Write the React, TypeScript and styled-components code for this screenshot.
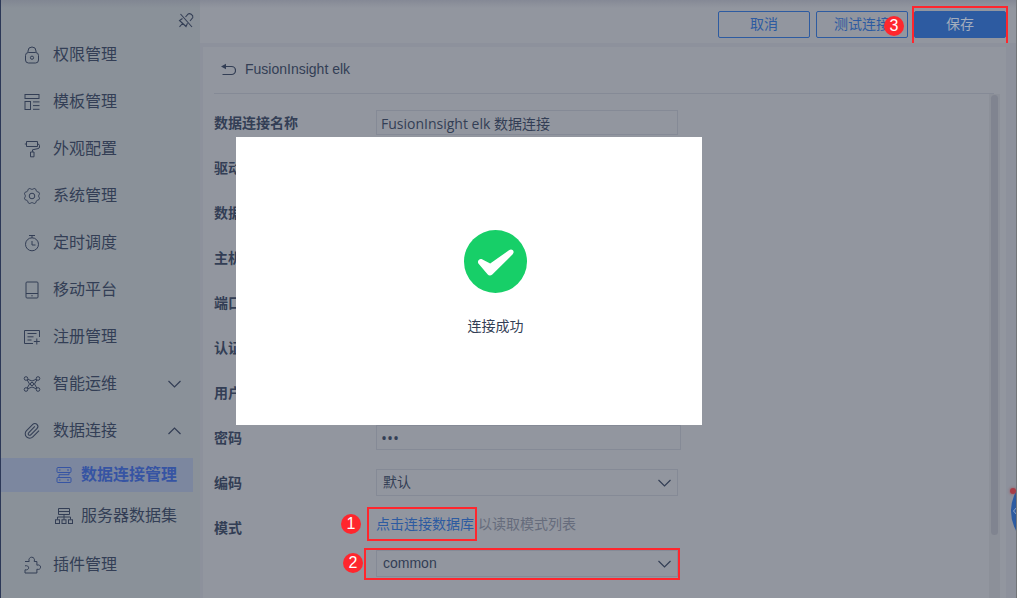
import React from "react";
import styled, { createGlobalStyle, css } from "styled-components";

const colors = {
  ink: "#333e55",
  muted: "#666c7c",
  blue: "#2d5ba1",
  active: "#3654a3",
  activeRow: "#7c879f",
  side: "#8a9199",
  panel: "#92969f",
  gutter: "#8d919c",
  line: "#858a96",
  red: "#ff262d",
};

const cjk = `"Noto Sans CJK SC", sans-serif`;

const GlobalStyle = createGlobalStyle`
  * { box-sizing: border-box; }
  body {
    margin: 0;
    color: ${colors.ink};
    background: ${colors.gutter};
    font: 14px/20px "Liberation Sans", ${cjk};
  }
  button, input, select { font: inherit; color: inherit; }
`;

const Page = styled.div`
  position: relative;
  display: grid;
  grid-template-columns: 199px 1fr;
  height: 100vh;
  overflow: hidden;
  border-left: 1px solid #2c3857;
  border-right: 1px solid #727579;
`;

const topShade = css`
  background-image: linear-gradient(rgba(120, 124, 140, 0.5), rgba(120, 124, 140, 0) 8px);
`;

const Sidebar = styled.aside`
  background-color: ${colors.side};
  ${topShade}
`;

const SidebarTop = styled.div`
  display: flex;
  justify-content: flex-end;
  align-items: flex-end;
  height: 31px;
  padding: 0 6px 3px 0;
`;

const PinButton = styled.button`
  display: flex;
  padding: 0;
  border: 0;
  background: none;
`;

const Menu = styled.ul`
  margin: 0;
  padding: 0;
  list-style: none;
`;

const SubMenu = styled(Menu)`
  display: grid;
  gap: 7px;
  padding: 4px 7px 8px 0;
`;

const MenuLink = styled.a`
  display: flex;
  align-items: center;
  gap: 12px;
  height: 47px;
  padding: 0 19px 0 22px;
  color: inherit;
  font-size: 16px;
  text-decoration: none;
`;

const SubLink = styled(MenuLink)<{ $active?: boolean }>`
  gap: 8px;
  height: 34px;
  padding: 0 0 0 54px;
  color: ${(p) => (p.$active ? colors.active : "inherit")};
  font-weight: ${(p) => (p.$active ? 700 : 400)};
  background: ${(p) => (p.$active ? colors.activeRow : "none")};
`;

const MenuText = styled.span`
  flex: 1;
  white-space: nowrap;
`;

const Main = styled.main`
  display: flex;
  flex-direction: column;
  min-width: 0;
`;

const ActionBar = styled.header`
  display: flex;
  justify-content: flex-end;
  gap: 6px;
  height: 43px;
  padding: 11px 10px 0 0;
  background-color: ${colors.panel};
  ${topShade}
`;

const ActionButton = styled.button<{ $primary?: boolean }>`
  width: 92px;
  height: 27px;
  padding: 0 0 2px;
  border: 1px solid ${colors.blue};
  border-radius: 2px;
  color: ${(p) => (p.$primary ? "#a3adbd" : colors.blue)};
  background: ${(p) => (p.$primary ? colors.blue : "none")};
`;

const Anchor = styled.span`
  position: relative;
  display: inline-block;
`;

const Frame = styled.span<{ $inset: string; $open?: boolean }>`
  position: absolute;
  inset: ${(p) => p.$inset};
  border: 2px solid ${colors.red};
  border-bottom-width: ${(p) => (p.$open ? 0 : 2)}px;
  pointer-events: none;
`;

const Badge = styled.span<{ $left: number; $top: number }>`
  position: absolute;
  left: ${(p) => p.$left}px;
  top: ${(p) => p.$top}px;
  width: 20px;
  height: 20px;
  border-radius: 50%;
  color: #fff;
  background: ${colors.red};
  font-size: 16px;
  text-align: center;
`;

const Panel = styled.section`
  flex: 1;
  display: flex;
  flex-direction: column;
  margin: 4px 10px 0 3px;
  padding: 0 6px 0 11px;
  background: ${colors.panel};
`;

const TitleRow = styled.div`
  display: flex;
  align-items: center;
  gap: 9px;
  height: 47px;
  margin-right: 6px;
  padding: 0 0 2px 7px;
  border-bottom: 1px solid ${colors.line};
`;

const Title = styled.h1`
  margin: 0;
  font-size: 14px;
  font-weight: 400;
`;

const Body = styled.div`
  flex: 1;
  display: flex;
  justify-content: space-between;
`;

const Form = styled.form`
  display: grid;
  align-content: start;
  gap: 18px;
  padding-top: 15px;
`;

const Row = styled.div<{ $top?: boolean }>`
  display: grid;
  grid-template-columns: 162px 305px;
  align-items: ${(p) => (p.$top ? "start" : "center")};
  min-height: 27px;
`;

const Label = styled.label`
  padding-top: 1px;
  font-weight: 700;
  line-height: 26px;
`;

const TextField = styled.input<{ $wide?: boolean }>`
  width: ${(p) => (p.$wide ? 305 : 302)}px;
  height: 25px;
  padding: 0 4px;
  border: 1px solid ${colors.line};
  border-radius: 0;
  background: none;
  font-family: "Open Sans", ${cjk};
  font-size: ${(p) => (p.$wide ? 16 : 14)}px;
`;

const SelectWrap = styled.div`
  position: relative;
  width: 302px;
  height: 27px;
`;

const Select = styled.select`
  appearance: none;
  display: block;
  width: 100%;
  height: 100%;
  padding: 0 30px 2px 6px;
  border: 1px solid ${colors.line};
  border-radius: 0;
  background: none;
`;

const SelectArrow = styled.span`
  position: absolute;
  top: 10px;
  right: 7px;
  display: flex;
  pointer-events: none;
`;

const SchemaField = styled.div`
  display: grid;
  gap: 16px;
`;

const Hint = styled.div`
  display: flex;
  gap: 4px;
  color: ${colors.muted};
`;

const ConnectLink = styled.a`
  color: ${colors.blue};
  text-decoration: none;
`;

const ScrollTrack = styled.div`
  width: 11px;
  padding: 1px 2px;
  background: #8c9099;
`;

const ScrollThumb = styled.div`
  height: 440px;
  border-radius: 4px;
  background: #808490;
`;

const HelpBubble = styled.a`
  position: absolute;
  top: 471px;
  right: -75px;
  width: 80px;
  height: 80px;
  border-radius: 50%;
  background: ${colors.blue};
`;

const HelpMark = styled.svg`
  position: absolute;
  left: 1px;
  top: 35px;
`;

const HelpDot = styled.span`
  position: absolute;
  top: 488px;
  right: 0;
  width: 6px;
  height: 6px;
  border-radius: 50%;
  background: #a63d47;
  box-shadow: 0 0 2px 1px rgba(166, 61, 71, 0.3);
`;

const Dialog = styled.div`
  position: absolute;
  left: 235px;
  top: 137px;
  display: flex;
  flex-direction: column;
  align-items: center;
  gap: 23px;
  width: 466px;
  height: 288px;
  padding: 93px 0 0 53px;
  background: #fff;
`;

const DialogText = styled.p`
  margin: 0;
`;

type IconProps = { children: React.ReactNode; size?: number };

const Icon = ({ children, size = 18 }: IconProps) => (
  <svg
    width={size}
    height={size}
    viewBox="0 0 18 18"
    fill="none"
    stroke="currentColor"
    strokeWidth="1"
    aria-hidden="true"
  >
    {children}
  </svg>
);

const Chevron = ({ up }: { up?: boolean }) => (
  <svg width="13" height="8" viewBox="0 0 13 8" fill="none" stroke="currentColor" strokeWidth="1.2" aria-hidden="true">
    <path d={up ? "M.5 7 6.5 1l6 6" : "M.5 1l6 6 6-6"} />
  </svg>
);

// Outline of an eight-lobed cog centred in the 18-unit icon box.
const gearPoints = Array.from({ length: 64 }, (_, i) => {
  const angle = (i / 64) * Math.PI * 2;
  const radius = 7.3 + 0.7 * Math.cos(8 * angle + Math.PI);
  return `${(9 + radius * Math.cos(angle)).toFixed(2)},${(9 + radius * Math.sin(angle)).toFixed(2)}`;
}).join(" ");

const icons = {
  lock: (
    <>
      <rect x="2.500" y="6.500" width="13" height="10.500" rx="3" />
      <path d="M5 6.500V5a4 4 0 0 1 8 0v1.500" />
      <circle cx="9" cy="11.700" r="1.600" />
    </>
  ),
  template: (
    <>
      <rect x="2" y="1.500" width="14" height="4" />
      <rect x="2" y="8.500" width="5.500" height="8" />
      <path d="M10 8.900h6.500M10 12.600h6.500M10 16.300h6.500" />
    </>
  ),
  roller: (
    <path d="M3.500 1.500h11v5h-11zM3.500 4H1.800M14.500 4q2 0 2 1.500V7q0 1.300-1.500 1.600L9.500 9.800v2M7.500 12h3.500v4.800H7.500z" strokeLinejoin="round" />
  ),
  gear: (
    <>
      <polygon points={gearPoints} strokeLinejoin="round" />
      <circle cx="9" cy="9" r="2.800" />
    </>
  ),
  timer: (
    <>
      <circle cx="9" cy="10.300" r="6.500" />
      <path d="M6 1.500h6M9 1.500v2.300M9 7v4h3.500" />
    </>
  ),
  mobile: (
    <>
      <rect x="3" y="1" width="12" height="16" rx="1" />
      <path d="M3 12.500h12M8.300 14.800h1.400" />
    </>
  ),
  register: (
    <path d="M16.500 9V2.500h-15v13h8.500M4.500 5.500h9M4.500 8.800h6M4.500 12h4M13.800 10.500v6M10.800 13.500h6" />
  ),
  network: (
    <>
      <circle cx="3" cy="3.500" r="1.800" />
      <circle cx="15" cy="3.500" r="1.800" />
      <circle cx="3" cy="14.500" r="1.800" />
      <circle cx="15" cy="14.500" r="1.800" />
      <circle cx="9" cy="9" r="1.600" />
      <path d="M4.800 4.300 9 6l4.200-1.700M4.800 13.700 9 12l4.200 1.700M4.200 5 6.500 9l-2.300 4M13.800 5l-2.300 4 2.300 4" />
    </>
  ),
  clip: (
    <g transform="scale(.74)" strokeWidth="1.400">
      <path d="m16 6-8.414 8.586a2 2 0 0 0 2.829 2.829l8.414-8.586a4 4 0 1 0-5.657-5.657l-8.379 8.551a6 6 0 1 0 8.485 8.485l8.379-8.551" />
    </g>
  ),
  connection: (
    <>
      <rect x="2" y="1.500" width="14" height="5" rx="1" />
      <rect x="2" y="11.500" width="14" height="5" rx="1" />
      <path d="M4 4h1.500M12 4h2M4 14h1.500M12 14h2M14 6.500v2.200H4v2.800" />
    </>
  ),
  server: (
    <>
      <path d="M3.500 1.500h11v6h-11zM3.500 4.500h11M9 7.500v5M2.500 12.500V10h13v2.500" />
      <rect x=".5" y="12.800" width="4" height="3.700" />
      <rect x="7" y="12.800" width="4" height="3.700" />
      <rect x="13.500" y="12.800" width="4" height="3.700" />
    </>
  ),
  plugin: (
    <path d="M2 5.500h4.200C5.200 3 6.800 1.200 8.700 1.200S12.200 3 11.200 5.500h2.700v3.700c2-.8 3.700.3 3.700 2s-1.700 2.700-3.700 2V17H2v-3.200c2.300.4 3.600-.5 3.600-2S4.300 9.400 2 9.800" strokeLinejoin="round" />
  ),
};

const menu = [
  { text: "权限管理", icon: icons.lock },
  { text: "模板管理", icon: icons.template },
  { text: "外观配置", icon: icons.roller },
  { text: "系统管理", icon: icons.gear },
  { text: "定时调度", icon: icons.timer },
  { text: "移动平台", icon: icons.mobile },
  { text: "注册管理", icon: icons.register },
  { text: "智能运维", icon: icons.network, expandable: true },
  {
    text: "数据连接",
    icon: icons.clip,
    expandable: true,
    children: [
      { text: "数据连接管理", icon: icons.connection, active: true },
      { text: "服务器数据集", icon: icons.server, active: false },
    ],
  },
  { text: "插件管理", icon: icons.plugin },
];

const plainFields = [
  { id: "driver", label: "驱动" },
  { id: "database", label: "数据库" },
  { id: "host", label: "主机" },
  { id: "port", label: "端口" },
  { id: "auth", label: "认证" },
  { id: "user", label: "用户" },
];

const SelectField = ({ id, value }: { id: string; value: string }) => (
  <>
    <Select id={id} defaultValue={value}>
      <option>{value}</option>
    </Select>
    <SelectArrow>
      <Chevron />
    </SelectArrow>
  </>
);

export default function App() {
  return (
    <Page>
      <GlobalStyle />
      <Sidebar>
        <SidebarTop>
          <PinButton type="button" aria-label="取消固定">
            <svg width="16" height="16" viewBox="0 0 16 16" fill="none" stroke="currentColor" strokeWidth="1.1" aria-hidden="true">
              <path d="M2.500 2 14 15M7.500 5 10 2.200c1.500-1.500 5.500.5 4.800 3.300L12 9M4.500 6.500 1.500 8.500l6.500 6 1.500-3.300M4.500 11.500 1.500 14.800" />
            </svg>
          </PinButton>
        </SidebarTop>
        <nav>
          <Menu>
            {menu.map((item) => (
              <li key={item.text}>
                <MenuLink href="#">
                  <Icon>{item.icon}</Icon>
                  <MenuText>{item.text}</MenuText>
                  {item.expandable && <Chevron up={!!item.children} />}
                </MenuLink>
                {item.children && (
                  <SubMenu>
                    {item.children.map((child) => (
                      <li key={child.text}>
                        <SubLink href="#" $active={child.active}>
                          <Icon>{child.icon}</Icon>
                          <MenuText>{child.text}</MenuText>
                        </SubLink>
                      </li>
                    ))}
                  </SubMenu>
                )}
              </li>
            ))}
          </Menu>
        </nav>
      </Sidebar>

      <Main>
        <ActionBar>
          <ActionButton type="button">取消</ActionButton>
          <Anchor>
            <ActionButton type="button">测试连接</ActionButton>
            <Badge $left={68} $top={5}>3</Badge>
          </Anchor>
          <Anchor>
            <ActionButton type="button" $primary>保存</ActionButton>
            <Frame $inset="-5px -2px 0 -2px" $open />
          </Anchor>
        </ActionBar>

        <Panel>
          <TitleRow>
            <svg width="15" height="13" viewBox="0 0 15 13" fill="none" stroke="currentColor" strokeWidth="1.2" aria-hidden="true">
              <path d="M3 3.500h7.500a4 4 0 0 1 0 8H1.500" />
              <path d="M0 3.500 5 .8v5.400z" fill="currentColor" stroke="none" />
            </svg>
            <Title>FusionInsight elk</Title>
          </TitleRow>
          <Body>
            <Form>
              <Row>
                <Label htmlFor="name">数据连接名称</Label>
                <TextField id="name" defaultValue="FusionInsight elk 数据连接" />
              </Row>
              {plainFields.map((field) => (
                <Row key={field.id}>
                  <Label htmlFor={field.id}>{field.label}</Label>
                  <TextField id={field.id} />
                </Row>
              ))}
              <Row>
                <Label htmlFor="password">密码</Label>
                <TextField id="password" type="password" defaultValue="elk" $wide />
              </Row>
              <Row>
                <Label htmlFor="encoding">编码</Label>
                <SelectWrap>
                  <SelectField id="encoding" value="默认" />
                </SelectWrap>
              </Row>
              <Row $top>
                <Label htmlFor="schema">模式</Label>
                <SchemaField>
                  <Hint>
                    <Anchor>
                      <ConnectLink href="#">点击连接数据库</ConnectLink>
                      <Frame $inset="-7px -3px -7px -9px" />
                      <Badge $left={-35} $top={0}>1</Badge>
                    </Anchor>
                    <span>以读取模式列表</span>
                  </Hint>
                  <SelectWrap>
                    <SelectField id="schema" value="common" />
                    <Frame $inset="-2px -2px -3px -12px" />
                    <Badge $left={-33} $top={3}>2</Badge>
                  </SelectWrap>
                </SchemaField>
              </Row>
            </Form>
            <ScrollTrack>
              <ScrollThumb />
            </ScrollTrack>
          </Body>
        </Panel>
      </Main>

      <HelpBubble href="#" aria-label="帮助">
        <HelpMark width="8" height="10" viewBox="0 0 8 10" fill="none" stroke="#8fa3c2" aria-hidden="true">
          <path d="M5 1 1.500 5 5 9" />
        </HelpMark>
      </HelpBubble>
      <HelpDot />

      <Dialog role="dialog" aria-label="连接成功">
        <svg width="63" height="63" viewBox="0 0 63 63" aria-hidden="true">
          <circle cx="31.500" cy="31.500" r="31.500" fill="#17cf68" />
          <path
            d="M14.200 33.200c-1-2.300 1.300-4.800 3.800-3.900l8.200 4.300L45 20.200c3.200-2 6.200 1.300 3.700 4L28.300 44.500c-1.700 1.500-3.500 1.300-4.800-.3z"
            fill="#fff"
          />
        </svg>
        <DialogText>连接成功</DialogText>
      </Dialog>
    </Page>
  );
}
